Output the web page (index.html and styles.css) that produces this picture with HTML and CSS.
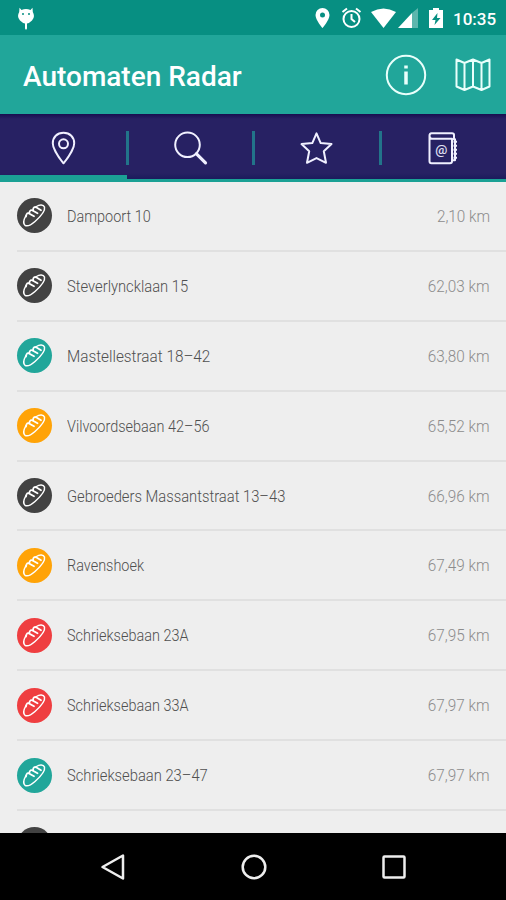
FILE: index.html
```html
<!DOCTYPE html>
<html lang="nl">
<head>
<meta charset="utf-8">
<title>Automaten Radar</title>
<link rel="stylesheet" href="styles.css">
</head>
<body>
<svg class="defs" aria-hidden="true">
  <symbol id="bread" viewBox="0 0 35 35">
    <path d="M9 17.500C7 21 6 25.500 8 27.300C10.500 29 14.500 26.500 18 23.500C22.500 19.500 28.500 13 27.500 9C26.500 6.500 22.500 6.500 19.500 8.500"/>
    <path class="cuts" d="M9 18.500C9.500 15 11 14.500 12.500 15.700L17 18.300M12.300 15.300C12.500 12 14.500 11.500 16 12.700L20.500 15.300M16 12.300C16 9.300 18 8.300 19.500 9.500L24 12.200"/>
  </symbol>
</svg>
<header class="status">
  <svg class="bug" viewBox="0 0 18 24"><path d="M2.500 .8L4.500 3Q9 1 13.500 3L15.500 .8L15.800 5Q18.500 10 15 13.500Q12.500 16 10 16.500V21.500L9 23L8 21.500V16.500Q5.500 16 3 13.500Q-.5 10 2.200 5Z" fill="#fff"/><path d="M5 7H7M11 7H13" stroke="#078f82" stroke-width="1.300"/></svg>
  <svg class="status-icons" viewBox="0 0 130 24">
    <g fill="#fff"><path d="M7.500 1A7 7 0 0 0 .5 8C.5 13 7.500 21 7.500 21S14.500 13 14.500 8A7 7 0 0 0 7.500 1Z"/><path d="M56 5Q68.500-2 81 5L68.500 21Z"/><path d="M97 6V21H83Z"/><path d="M97 6L103 1V21H97Z" opacity=".35"/><path d="M114 3H118V1H124V3H128V21H114Z"/></g>
    <circle cx="7.500" cy="8" r="2.500" fill="#078f82"/>
    <path d="M122.500 6L117 13H120.500L119.500 18L125.500 11H122Z" fill="#078f82"/>
    <g fill="none" stroke="#fff" stroke-width="2"><circle cx="36.500" cy="12" r="8"/><path d="M27.500 5L32 1.500M45.500 5L41 1.500M36.500 7V12L40 15"/></g>
  </svg>
  <span class="clock">10:35</span>
</header>
<div class="appbar">
  <h1>Automaten Radar</h1>
  <svg class="info" viewBox="0 0 42 42"><circle cx="21" cy="21" r="19.200"/><path d="M21 17.500V30.500M21 11.500V14.500" class="thick"/></svg>
  <svg class="map" viewBox="0 0 36 34"><path d="M1.500 1.500L9.500 5L18 1.500L26.500 5L34.500 1.500V28.500L26.500 32L18 28.500L9.500 32L1.500 28.500ZM9.500 5V32M18 2V29M26.500 5V32"/></svg>
</div>
<nav class="tabs">
  <div class="tab active"><svg viewBox="0 0 36 36"><path d="M18 2.500C11.500 2.500 7.300 7 7.300 13C7.300 20 18 33 18 33S28.700 20 28.700 13C28.700 7 24.500 2.500 18 2.500Z"/><circle cx="18" cy="13.500" r="4.500"/></svg></div>
  <div class="tab"><svg viewBox="0 0 36 36"><circle cx="15" cy="14.500" r="12.300"/><path d="M24 23.500L33 32.500" class="handle"/></svg></div>
  <div class="tab"><svg viewBox="0 0 36 36"><path d="M18 3L22.200 12.800L33 13.800L25.300 21L27.500 32.500L18 27.800L8.500 32.500L10.700 21L3 13.800L13.800 12.800Z"/></svg></div>
  <div class="tab"><svg viewBox="0 0 36 36"><path d="M28.500 8V4.500Q28.500 3 26.500 3H6Q4 3 4 5.500V31Q4 33 6 33H24.500Q26.500 33 26.500 31V8.500H6.500Q4 8.500 4 5.500M27 9H29.500V30H27"/><path d="M28 11.500H31.500M28 15.500H31.500M28 19.500H31.500M28 23.500H31.500M28 27.500H31.500"/><text x="15.700" y="24">@</text></svg></div>
</nav>
<main class="list">
  <div class="row"><svg class="badge dark"><use href="#bread"/></svg><span class="name narrow">Dampoort 10</span><span class="km">2,10 km</span></div>
  <div class="row"><svg class="badge dark"><use href="#bread"/></svg><span class="name">Steverlyncklaan 15</span><span class="km">62,03 km</span></div>
  <div class="row"><svg class="badge teal"><use href="#bread"/></svg><span class="name wide">Mastellestraat 18–42</span><span class="km">63,80 km</span></div>
  <div class="row"><svg class="badge orange"><use href="#bread"/></svg><span class="name narrow">Vilvoordsebaan 42–56</span><span class="km">65,52 km</span></div>
  <div class="row"><svg class="badge dark"><use href="#bread"/></svg><span class="name">Gebroeders Massantstraat 13–43</span><span class="km">66,96 km</span></div>
  <div class="row"><svg class="badge orange"><use href="#bread"/></svg><span class="name narrow">Ravenshoek</span><span class="km">67,49 km</span></div>
  <div class="row"><svg class="badge red"><use href="#bread"/></svg><span class="name narrow">Schrieksebaan 23A</span><span class="km">67,95 km</span></div>
  <div class="row"><svg class="badge red"><use href="#bread"/></svg><span class="name narrow">Schrieksebaan 33A</span><span class="km">67,97 km</span></div>
  <div class="row"><svg class="badge teal"><use href="#bread"/></svg><span class="name">Schrieksebaan 23–47</span><span class="km">67,97 km</span></div>
  <div class="row"><svg class="badge dark"><use href="#bread"/></svg></div>
</main>
<footer class="navbar">
  <svg viewBox="0 0 30 30"><path d="M25 3.500V26.500L4.500 15Z"/></svg>
  <svg viewBox="0 0 30 30"><circle cx="15" cy="15" r="11.300"/></svg>
  <svg viewBox="0 0 30 30"><rect x="4.500" y="4.500" width="21" height="21" rx="1"/></svg>
</footer>
</body>
</html>
```
FILE: styles.css
```css
* { box-sizing: border-box; }
body {
  margin: 0;
  width: 506px;
  height: 900px;
  overflow: hidden;
  display: flex;
  flex-direction: column;
  background: #eee;
  font-family: Roboto, "Liberation Sans", sans-serif;
}
svg { display: block; flex: none; }
.defs { width: 0; height: 0; position: absolute; }
.status {
  height: 35px;
  flex: none;
  display: flex;
  align-items: flex-start;
  padding: 7px 0 0 17px;
  background: #078f82;
  color: #fff;
}
.bug { width: 18px; height: 24px; }
.status-icons { width: 130px; height: 24px; margin-left: 280px; }
.clock { margin-left: 8px; font-size: 17px; font-weight: 500; line-height: 25px; }
.appbar {
  height: 79px;
  flex: none;
  display: flex;
  align-items: center;
  padding: 0 15px 0 23px;
  background: #21a69a;
  color: #fff;
}
h1 { margin: 0 auto 0 0; padding-top: 4px; font-size: 28px; font-weight: 500; white-space: nowrap; }
.appbar svg { fill: none; stroke: #e9fffb; stroke-width: 2; stroke-linejoin: round; }
.appbar .thick { stroke-width: 3.5; }
.info { width: 42px; height: 42px; }
.map { width: 36px; height: 34px; margin-left: 28.5px; }
.tabs {
  height: 68px;
  flex: none;
  display: grid;
  grid-template-columns: repeat(4, 1fr);
  background: linear-gradient(#180e50 0, #272163 5px, #272163 59px, #1b1b5c 65px);
}
.tab {
  display: flex;
  justify-content: center;
  padding-top: 16px;
  border-bottom: 3px solid #1ba195;
  position: relative;
}
.tab.active { border-bottom-width: 7px; }
.tab:not(:last-child)::after {
  content: "";
  position: absolute;
  right: -2px;
  top: 17px;
  width: 3px;
  height: 34px;
  background: #22748a;
}
.tab svg { width: 36px; height: 36px; fill: none; stroke: #f0f0ff; stroke-width: 2; stroke-linejoin: round; transform: translate(.5px, .3px); }
.tab .handle { stroke-width: 3.2; stroke-linecap: round; }
.tab text { fill: #e0e0f4; stroke: none; font-size: 13.5px; font-weight: 500; text-anchor: middle; }
.list { flex: 1; min-height: 0; overflow: hidden; padding-left: 17px; }
.row {
  height: 69.9px;
  display: flex;
  align-items: center;
  border-bottom: 2px solid #e0e0e0;
  padding-right: 16px;
}
.badge { width: 35px; height: 35px; border-radius: 50%; margin-right: 15px; fill: none; stroke: #fff; stroke-width: 1.5; stroke-linecap: round; stroke-linejoin: round; }
#bread .cuts { stroke-width: 1.8; }
.dark { background: #424242; }
.teal { background: #21a69a; }
.orange { background: #ffa307; }
.red { background: #ef3e40; }
.name, .km { font-size: 17px; font-weight: 300; white-space: nowrap; }
.name { color: #505050; transform: scaleX(.868); transform-origin: left; }
.name.narrow { transform: scaleX(.85); }
.name.wide { transform: scaleX(.9); }
.km { margin-left: auto; color: #8c8c8c; transform: scaleX(.9); transform-origin: right; }
.navbar {
  height: 67px;
  flex: none;
  display: flex;
  justify-content: space-between;
  align-items: center;
  padding: 0 97px 0 98px;
  background: #000;
}
.navbar svg { width: 30px; height: 30px; fill: none; stroke: #eee; stroke-width: 2.5; stroke-linejoin: round; }
```
